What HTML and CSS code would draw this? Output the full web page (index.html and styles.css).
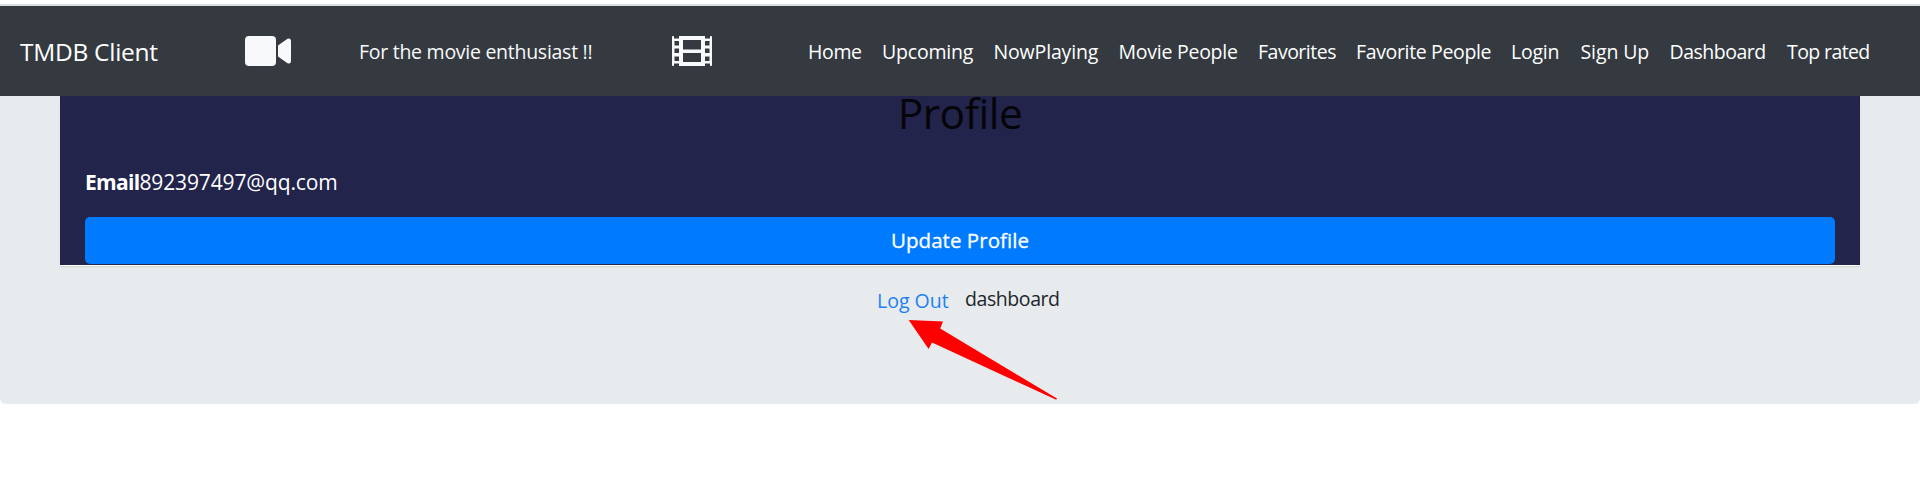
FILE: index.html
```html
<!DOCTYPE html>
<html lang="en">
<head>
<meta charset="utf-8">
<title>TMDB Client</title>
<link rel="stylesheet" href="styles.css">
</head>
<body>
<header class="navbar">
  <a class="brand">TMDB Client</a>
  <svg class="camera" width="46" height="30" viewBox="0 0 46 30"><rect width="31" height="30" rx="4"/><path d="M33 9.5 42.5 2.7Q46 1.5 46 5V25Q46 28.500 42.500 27.300L33 20.500Z"/></svg>
  <span class="tagline">For the movie enthusiast !!</span>
  <svg class="film" width="40" height="30" viewBox="0 0 40 30"><path fill-rule="evenodd" d="M0 1Q0 0 1 0H2V2.500H7V0H33V2.500H38V0H39Q40 0 40 1V29Q40 30 39 30H38V27.500H33V30H7V27.500H2V30H1Q0 30 0 29ZM2.500 5V9.500H7V5ZM2.500 12.500V17H7V12.500ZM2.500 20.500V25H7V20.500ZM33 5V9.500H37.500V5ZM33 12.500V17H37.500V12.500ZM33 20.500V25H37.500V20.500ZM11 4V13.500H29V4ZM11 17V26H29V17Z"/></svg>
  <nav class="links">
    <a class="home">Home</a><a class="upcoming">Upcoming</a><a class="playing">NowPlaying</a><a class="people">Movie People</a><a class="favorites">Favorites</a><a class="fav-people">Favorite People</a><a class="login">Login</a><a class="signup">Sign Up</a><a class="dash">Dashboard</a><a class="top">Top rated</a>
  </nav>
</header>
<main class="jumbotron">
  <section class="card">
    <h2 class="title">Profile</h2>
    <p class="email"><strong>Email</strong><span class="address">892397497@qq.com</span></p>
    <button class="update"><span>Update Profile</span></button>
  </section>
  <div class="actions"><a class="logout">Log Out</a><span class="dashboard">dashboard</span></div>
  <svg class="arrow" width="150" height="82" viewBox="908 319 150 82"><path d="M908.700 320 943 321.500 940.200 328.500 1057 398.600 1056.200 399.800 932 342.600 928.600 349Z"/></svg>
</main>
</body>
</html>
```
FILE: styles.css
```css
* { box-sizing: border-box; }
body { margin: 0; padding-top: 4px; background: #fff; font-family: "Open Sans", "Noto Sans", sans-serif; font-size: 19.500px; line-height: 30px; color: #212529; }
.navbar { display: flex; align-items: center; height: 92px; border-top: 2px solid #dadcdf; background: #343a40; color: #fff; padding-left: 20px; white-space: nowrap; }
.navbar svg { fill: #f8f9fa; flex: none; }
.brand { width: 225px; padding-top: 2px; font-size: 24.500px; letter-spacing: -0.280px; }
.tagline { width: 313px; margin-left: 68px; padding-top: 2px; color: #f8f9fa; letter-spacing: -0.270px; }
.links { display: flex; gap: 20px; margin-left: 96px; padding-top: 2px; }
.links a { flex: none; letter-spacing: -0.500px; }
.links .home { width: 54px; letter-spacing: -0.350px; }
.links .upcoming { width: 91.500px; letter-spacing: -0.200px; }
.links .playing { width: 105px; letter-spacing: -0.150px; }
.links .people { width: 119.500px; letter-spacing: -0.250px; }
.links .favorites { width: 78px; }
.links .fav-people { width: 135px; letter-spacing: -0.350px; }
.links .login { width: 49.500px; letter-spacing: -0.250px; }
.links .signup { width: 69px; letter-spacing: -0.100px; }
.links .dash { width: 97.500px; }
.links .top { width: 84px; letter-spacing: -0.600px; }
.jumbotron { position: relative; height: 308px; padding: 0 60px; background: #e7ebee; border-radius: 0 0 6px 6px; }
.card { height: 169px; padding: 0 25px 1px; display: flex; flex-direction: column; background: #22244b; box-shadow: 0 1px 0 #fff, 0 2px 1px #d3d5d8; }
.title { margin: -7px 0 0; height: 48px; text-align: center; font-weight: 400; font-size: 42.500px; line-height: 48px; color: #050509; letter-spacing: -0.500px; }
.email { margin: 29px 0 0; height: 33px; font-size: 21px; line-height: 33px; color: #fff; }
.email strong { letter-spacing: -0.700px; }
.address { letter-spacing: -0.130px; }
.update { margin: 18px 0 0; height: 47px; padding: 0; border: 0; border-radius: 5px; background: #007bff; color: #fff; font: 500 20.500px/47px "Open Sans", sans-serif; letter-spacing: 0.050px; -webkit-text-stroke: 0.300px #fff; }
.actions { display: flex; padding: 19px 0 0 817px; white-space: nowrap; }
.logout { width: 88px; padding-top: 2px; color: #1d80f5; }
.dashboard { letter-spacing: -0.420px; }
.arrow { position: absolute; left: 908px; top: 223px; fill: #f00; }
```
